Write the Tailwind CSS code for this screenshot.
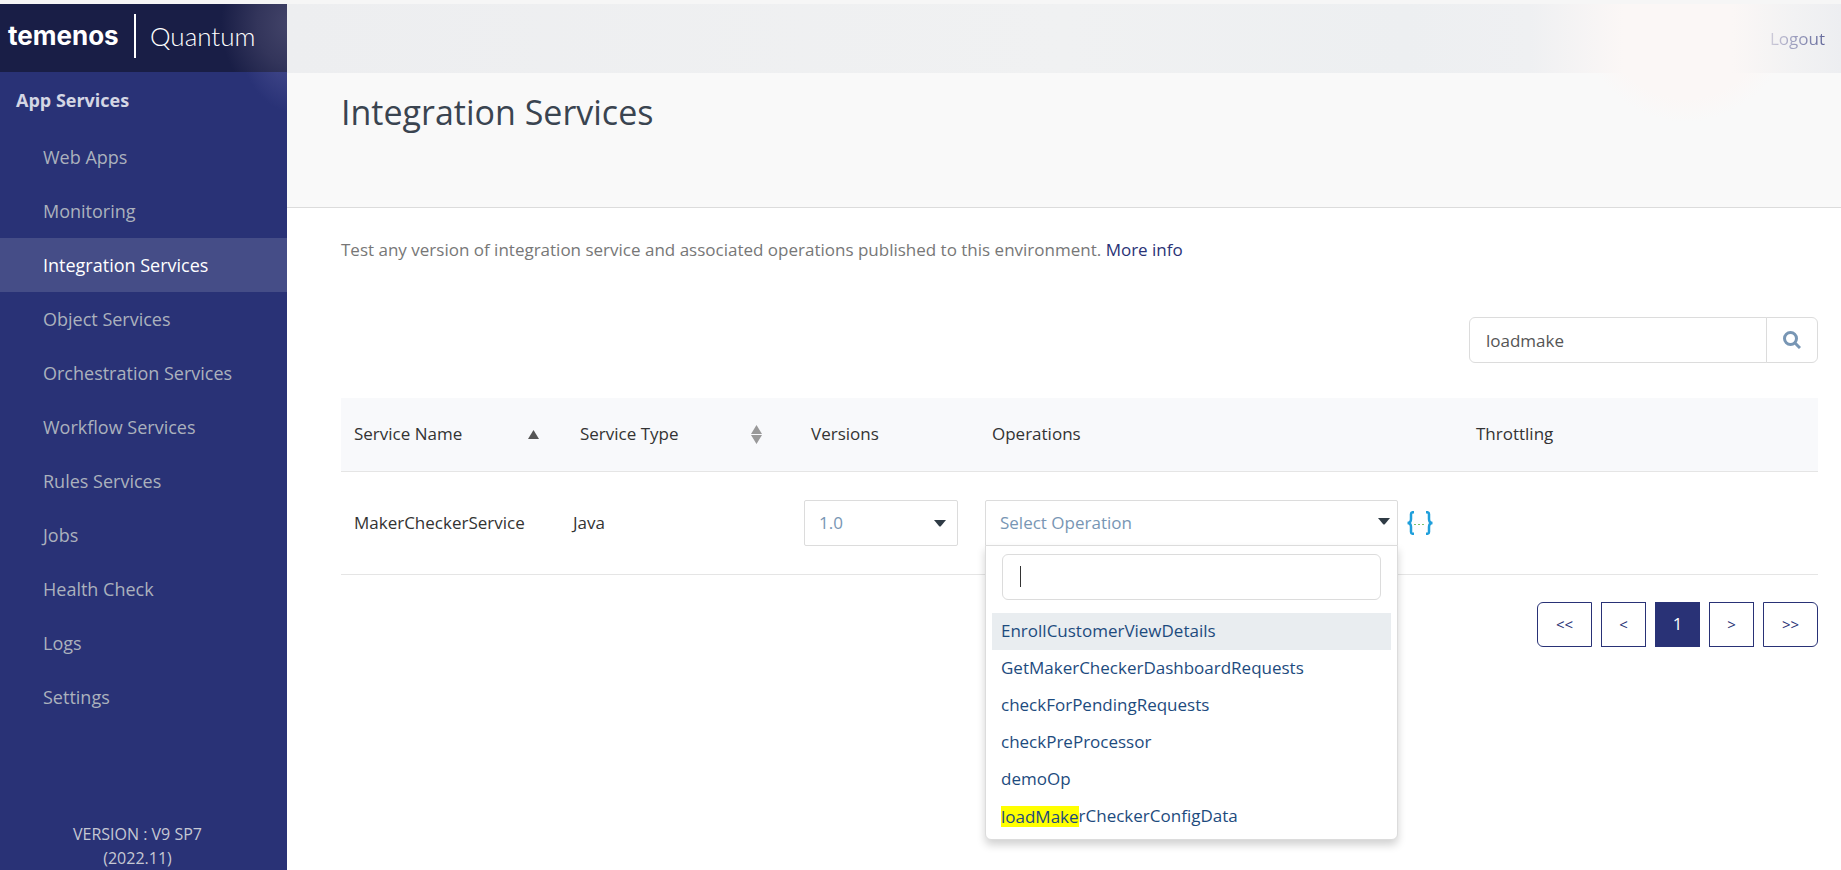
<!DOCTYPE html>
<html lang="en">
<head>
    <meta charset="UTF-8">
    <meta name="viewport" content="width=device-width, initial-scale=1.0">
    <title>Integration Services - Temenos Quantum</title>
    <script src="https://cdn.jsdelivr.net/npm/@tailwindcss/browser@4"></script>
</head>
<body class="bg-white font-['Open_Sans','Noto_Sans',sans-serif] text-[17px] leading-6 text-[#333]">
    <div class="min-h-screen flex flex-col">
        <div class="h-1 bg-[#f6f6f6]"></div>

        <div class="flex grow">
            <!-- Sidebar -->
            <aside class="w-[287px] shrink-0 flex flex-col bg-[#293276] bg-[radial-gradient(ellipse_56px_84px_at_293px_24px,#4a4f91_0%,#3a4184_60%,transparent_100%)]">
                <div class="h-[68px] px-2 pb-1 flex items-center bg-[#191e46] bg-[radial-gradient(ellipse_72px_84px_at_293px_20px,#44456a_0%,#33355b_50%,transparent_100%)] text-white">
                    <span class="w-[126px] font-['Inter',sans-serif] text-[26px] font-bold">temenos</span>
                    <span class="w-[2px] h-11 bg-white"></span>
                    <span class="ml-[14px] font-['Lato',sans-serif] text-[26px] font-light">Quantum</span>
                </div>
                <h2 class="h-[58px] pl-4 pt-[14px] text-lg font-bold text-[#d4d6e4]">App Services</h2>
                <nav class="flex flex-col text-lg text-[#abb1bd]">
                    <a href="#" class="h-[54px] pl-[43px] flex items-center">Web Apps</a>
                    <a href="#" class="h-[54px] pl-[43px] flex items-center">Monitoring</a>
                    <a href="#" class="h-[54px] pl-[43px] flex items-center bg-[#454d87] text-white">Integration Services</a>
                    <a href="#" class="h-[54px] pl-[43px] flex items-center">Object Services</a>
                    <a href="#" class="h-[54px] pl-[43px] flex items-center">Orchestration Services</a>
                    <a href="#" class="h-[54px] pl-[43px] flex items-center">Workflow Services</a>
                    <a href="#" class="h-[54px] pl-[43px] flex items-center">Rules Services</a>
                    <a href="#" class="h-[54px] pl-[43px] flex items-center">Jobs</a>
                    <a href="#" class="h-[54px] pl-[43px] flex items-center">Health Check</a>
                    <a href="#" class="h-[54px] pl-[43px] flex items-center">Logs</a>
                    <a href="#" class="h-[54px] pl-[43px] flex items-center">Settings</a>
                </nav>
                <p class="mt-auto pr-3 text-center text-base text-[#c5c8d3]">VERSION : V9 SP7<br>(2022.11)</p>
            </aside>

            <main class="grow min-w-0">
                <div class="bg-[#f9f9f9] bg-[radial-gradient(ellipse_110px_118px_at_90%_0px,#fbf7f6_80%,transparent_100%)] border-b border-[#dcdcdc]">
                    <header class="h-[69px] pr-4 flex justify-end items-center bg-[linear-gradient(90deg,#edeef0_0%,#f0f1f2_50%,#edeff1_72%,#eff0f2_80%,#fbf7f6_86%,#fbf7f6_93%,#f2f2f3_97%,#edeef1_100%)]">
                        <a href="#" class="bg-linear-to-r from-[#d0cdda] to-[#62679a] bg-clip-text text-transparent">Logout</a>
                    </header>
                    <div class="h-[134px] px-[54px] pt-4">
                        <h1 class="text-[34px] leading-[46px] text-[#3a4450]">Integration Services</h1>
                    </div>
                </div>

                <div class="pl-[54px] pr-[23px]">
                    <p class="pt-[30px] text-[#777]">Test any version of integration service and associated operations published to this environment. <a href="#" class="text-[#293276]">More info</a></p>

                    <form class="mt-[55px] flex justify-end">
                        <input type="text" aria-label="Search services" value="loadmake"
                               class="w-[298px] h-[46px] px-4 border border-[#dcdcdc] rounded-l-md text-[#555]">
                        <button type="button" aria-label="Search" class="w-[52px] h-[46px] -ml-px flex items-center justify-center border border-[#dcdcdc] rounded-r-md">
                            <svg class="size-[18px]" viewBox="0 0 18 18" fill="none" stroke="#7896b4" stroke-width="3">
                                <circle cx="7.5" cy="7.5" r="6"></circle>
                                <path d="M12 12l5 5"></path>
                            </svg>
                        </button>
                    </form>

                    <table class="w-full mt-[35px] table-fixed text-left">
                        <colgroup>
                            <col class="w-[220px]">
                            <col class="w-[231px]">
                            <col class="w-[181px]">
                            <col class="w-[484px]">
                            <col>
                        </colgroup>
                        <thead>
                            <tr class="h-[73px] bg-[#f8f9fb] border-b border-[#e5e5e5]">
                                <th class="pl-[13px] pr-[22px] font-normal">
                                    <div class="flex items-center justify-between">
                                        Service Name
                                        <svg class="w-[11px] h-[9px]" viewBox="0 0 11 9" fill="#555"><path d="M5.500 0L11 9H0z"></path></svg>
                                    </div>
                                </th>
                                <th class="pl-[19px] pr-[30px] font-normal">
                                    <div class="flex items-center justify-between">
                                        Service Type
                                        <svg class="w-[11px] h-[19px]" viewBox="0 0 11 19" fill="#999"><path d="M5.500 0L11 9H0zM0 10h11L5.500 19z"></path></svg>
                                    </div>
                                </th>
                                <th class="pl-[19px] font-normal">Versions</th>
                                <th class="pl-[19px] font-normal">Operations</th>
                                <th class="pl-[19px] font-normal">Throttling</th>
                            </tr>
                        </thead>
                        <tbody>
                            <tr class="h-[103px] border-b border-[#e5e5e5]">
                                <td class="pl-[13px]">MakerCheckerService</td>
                                <td class="pl-3">Java</td>
                                <td class="pl-3">
                                    <div class="relative w-[154px]">
                                        <select aria-label="Version" class="w-full h-[46px] px-[14px] appearance-none border border-[#dcdcdc] rounded-xs bg-white text-[#7896b4]">
                                            <option>1.0</option>
                                        </select>
                                        <svg class="absolute right-3 top-5 w-3 h-[7px]" viewBox="0 0 12 7" fill="#2f3b45"><path d="M0 0h12L6.800 6.200q-.8.800-1.600 0z"></path></svg>
                                    </div>
                                </td>
                                <td class="pl-3">
                                    <div class="flex items-center">
                                        <div class="relative w-[413px]">
                                            <select aria-label="Operation" class="w-full h-[46px] px-[14px] appearance-none border border-[#dcdcdc] rounded-t-xs bg-white text-[#7896b4]">
                                                <option>Select Operation</option>
                                            </select>
                                            <svg class="absolute right-2 top-[18px] w-3 h-[7px]" viewBox="0 0 12 7" fill="#2f3b45"><path d="M0 0h12L6.800 6.200q-.8.800-1.600 0z"></path></svg>

                                            <!-- Open operation list -->
                                            <div class="absolute z-10 inset-x-0 top-[45px] pb-1 bg-white border border-[#dcdcdc] rounded-b-md shadow-[0_5px_8px_rgba(0,0,0,0.18)]">
                                                <div class="relative mx-4 mt-2">
                                                    <input type="text" aria-label="Filter operations" class="block w-full h-[46px] px-4 border border-[#dcdcdc] rounded-md caret-transparent">
                                                    <span class="absolute left-[18px] top-3 w-px h-[21px] bg-[#333]"></span>
                                                </div>
                                                <ul role="listbox" aria-label="Operations" class="mx-[6px] mt-[13px] text-[#1d4b7e]">
                                                    <li role="option" aria-selected="true" class="h-[37px] px-[9px] flex items-center bg-[#e9edf0]">EnrollCustomerViewDetails</li>
                                                    <li role="option" class="h-[37px] px-[9px] flex items-center">GetMakerCheckerDashboardRequests</li>
                                                    <li role="option" class="h-[37px] px-[9px] flex items-center">checkForPendingRequests</li>
                                                    <li role="option" class="h-[37px] px-[9px] flex items-center">checkPreProcessor</li>
                                                    <li role="option" class="h-[37px] px-[9px] flex items-center">demoOp</li>
                                                    <li role="option" class="h-[37px] px-[9px] flex items-center"><mark class="bg-[#ff0] leading-[21px] text-[#1d4b7e]">loadMake</mark>rCheckerConfigData</li>
                                                </ul>
                                            </div>
                                        </div>
                                        <button type="button" aria-label="View JSON" class="ml-2">
                                            <svg class="w-[28px] h-6" viewBox="0 0 28 24" fill="none" stroke="#1f9fdb" stroke-width="2.500">
                                                <path d="M8 1.200H7Q5 1.200 5 3V8Q5 12 1.500 12Q5 12 5 16V21Q5 22.800 7 22.800H8"></path>
                                                <path d="M20 1.200h1q2 0 2 1.800v5q0 4 3.500 4q-3.500 0-3.500 4v5q0 1.800-2 1.800h-1"></path>
                                                <path d="M8 13.500h10" stroke="#7ac36a" stroke-width="1" stroke-dasharray="2 2"></path>
                                            </svg>
                                        </button>
                                    </div>
                                </td>
                                <td></td>
                            </tr>
                        </tbody>
                    </table>

                    <nav aria-label="Pagination" class="mt-[27px] flex justify-end gap-[9px] text-[15px] text-[#293276]">
                        <button type="button" class="w-[55px] h-[45px] border border-[#293276] rounded-l-md">&lt;&lt;</button>
                        <button type="button" class="w-[45px] h-[45px] border border-[#293276]">&lt;</button>
                        <button type="button" class="w-[45px] h-[45px] border border-[#293276] bg-[#293276] text-[17px] text-white">1</button>
                        <button type="button" class="w-[45px] h-[45px] border border-[#293276]">&gt;</button>
                        <button type="button" class="w-[55px] h-[45px] border border-[#293276] rounded-r-md">&gt;&gt;</button>
                    </nav>
                </div>
            </main>
        </div>
    </div>
</body>
</html>
